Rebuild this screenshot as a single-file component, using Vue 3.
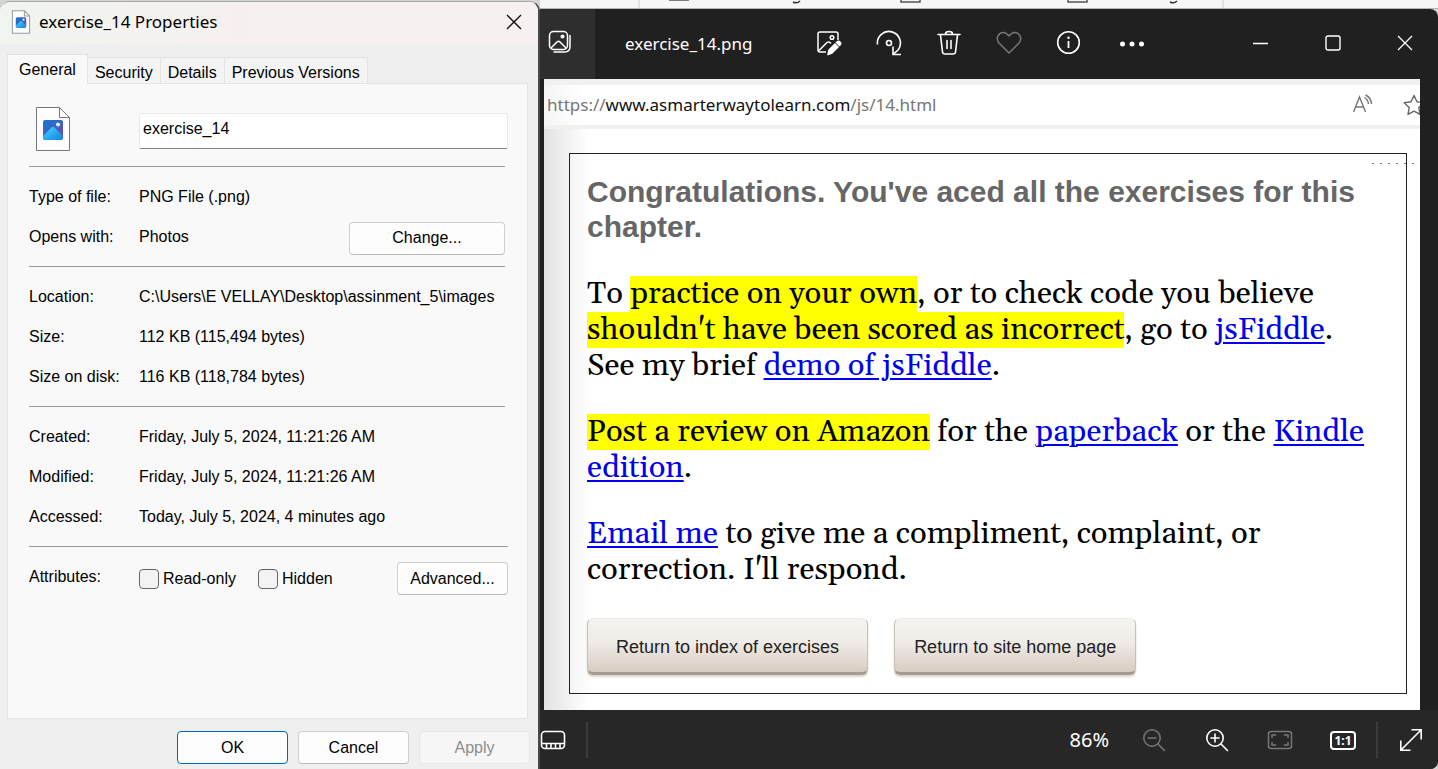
<script setup>
import { ref } from 'vue'

const fileName = ref('exercise_14')
const tabs = ['General', 'Security', 'Details', 'Previous Versions']
const location = [
  ['Location:', 'C:\\Users\\E VELLAY\\Desktop\\assinment_5\\images'],
  ['Size:', '112 KB (115,494 bytes)'],
  ['Size on disk:', '116 KB (118,784 bytes)'],
]
const dates = [
  ['Created:', 'Friday, July 5, 2024, 11:21:26 AM'],
  ['Modified:', 'Friday, July 5, 2024, 11:21:26 AM'],
  ['Accessed:', 'Today, July 5, 2024, 4 minutes ago'],
]
</script>

<template>
  <div class="desktop">
    <section class="dialog">
      <header class="titlebar">
        <svg class="file-small" width="20" height="24" viewBox="0 0 36 46">
          <defs>
            <linearGradient id="sky" x1="0" y1="0" x2="1" y2="1">
              <stop offset="0" stop-color="#1976cf" />
              <stop offset="0.55" stop-color="#3f5fc4" />
              <stop offset="1" stop-color="#8a3fb0" />
            </linearGradient>
            <linearGradient id="hill" x1="0" y1="0" x2="1" y2="1">
              <stop offset="0" stop-color="#50d4fb" />
              <stop offset="1" stop-color="#0b84e0" />
            </linearGradient>
          </defs>
          <path d="M1.500 1.500h23l10 10v33h-33z" fill="#fdfdfd" stroke="#9b9b9b" stroke-width="2" />
          <path d="M24.500 1.500v10h10" fill="none" stroke="#9b9b9b" stroke-width="2" />
          <rect x="8" y="14" width="20" height="20" rx="3" fill="url(#sky)" />
          <path d="M8 30l8.500-8.500q1.500-1.500 3 0L28 30q0 4-3 4H11q-3 0-3-4z" fill="url(#hill)" />
          <circle cx="23" cy="18.500" r="2" fill="#fff" />
        </svg>
        <h1>exercise_14 Properties</h1>
        <button class="close" aria-label="Close">
          <svg width="16" height="16" viewBox="0 0 16 16" fill="none" stroke="#111" stroke-width="1.400">
            <path d="M1 1l14 14M15 1L1 15" />
          </svg>
        </button>
      </header>

      <nav class="tabs" role="tablist">
        <button v-for="(t, i) in tabs" :key="t" role="tab" :aria-selected="i === 0" :class="{ active: i === 0 }">{{ t }}</button>
      </nav>

      <div class="panel">
        <div class="name-row">
          <svg width="36" height="46" viewBox="0 0 36 46">
            <path d="M1.500 1.500h23l10 10v33h-33z" fill="#fdfdfd" stroke="#777" />
            <path d="M24.500 1.500v10h10" fill="none" stroke="#777" />
            <rect x="8" y="14" width="20" height="20" rx="2" fill="url(#sky)" />
            <path d="M8 30l8.500-8.500q1.500-1.500 3 0L28 30q0 4-3 4H11q-3 0-3-4z" fill="url(#hill)" />
            <circle cx="23" cy="18.500" r="2" fill="#e8f4ff" />
          </svg>
          <input v-model="fileName" type="text" aria-label="File name" />
        </div>

        <dl class="group">
          <div class="row"><dt>Type of file:</dt><dd>PNG File (.png)</dd></div>
          <div class="row">
            <dt>Opens with:</dt><dd>Photos</dd>
            <button class="btn change">Change...</button>
          </div>
        </dl>
        <dl class="group">
          <div v-for="r in location" :key="r[0]" class="row"><dt>{{ r[0] }}</dt><dd>{{ r[1] }}</dd></div>
        </dl>
        <dl class="group">
          <div v-for="r in dates" :key="r[0]" class="row"><dt>{{ r[0] }}</dt><dd>{{ r[1] }}</dd></div>
        </dl>
        <div class="group attributes">
          <span class="attr-label">Attributes:</span>
          <label class="read-only"><input type="checkbox" />Read-only</label>
          <label><input type="checkbox" />Hidden</label>
          <button class="btn advanced">Advanced...</button>
        </div>
      </div>

      <footer class="actions">
        <button class="btn primary">OK</button>
        <button class="btn">Cancel</button>
        <button class="btn" disabled>Apply</button>
      </footer>
    </section>

    <div class="backdrop">
      <div class="strip" aria-hidden="true">
        <svg width="100%" height="8" fill="none" stroke="#555" stroke-width="1.500">
          <path d="M99 -1v9M683 -1v9" stroke="#ddd" />
          <path d="M129 0h20" />
          <path d="M361 -2v4h19v-4M528 -2v4h19v-4" />
          <path d="M253 2q4 2 7-1M630 2q4 2 7-1" stroke="#333" />
        </svg>
      </div>
      <section class="photos">
        <header class="toolbar">
          <button class="gallery" aria-label="Gallery">
            <svg width="24" height="24" viewBox="0 0 24 24" fill="none" stroke="#fff" stroke-width="1.500" stroke-linecap="round" stroke-linejoin="round">
              <rect x="1.500" y="1.500" width="18" height="18" rx="4" />
              <path d="M3 18l6-6q1.500-1.500 3 0l6 6M22 5.500v11q0 5.500-5.500 5.500H6" />
              <circle cx="14.500" cy="6.500" r="1.300" fill="#fff" />
            </svg>
          </button>
          <h2>exercise_14.png</h2>
          <div class="tools">
            <button aria-label="Edit image">
              <svg width="26" height="26" viewBox="0 0 26 26" fill="none" stroke="#fff" stroke-width="1.500" stroke-linejoin="round">
                <path d="M10 22H4q-2 0-2-2V4q0-2 2-2h16q2 0 2 2v6M3 20.500l8-8q1.500-1 3 0l1 1" />
                <circle cx="16" cy="7.500" r="1.800" />
                <path d="M12 24.500l1-4.500 8-8q1.500-1.500 3 0t0 3l-8 8z" fill="#fff" stroke-width="1.500" />
                <path d="M19 12.500l4.500 4.500" stroke="#202020" stroke-width="1" />
              </svg>
            </button>
            <button aria-label="Rotate">
              <svg width="26" height="26" viewBox="0 0 26 26" fill="none" stroke="#fff" stroke-width="1.600">
                <path d="M1.500 14.500A11.500 11.500 0 1 1 22 20l-5 4.500M17 16.500V24.500h8" />
                <circle cx="13" cy="13" r="2.500" />
              </svg>
            </button>
            <button aria-label="Delete">
              <svg width="26" height="26" viewBox="0 0 26 26" fill="none" stroke="#fff" stroke-width="1.600" stroke-linecap="round" stroke-linejoin="round">
                <path d="M2 4.500h22M9.500 4q0-2.500 3.500-2.500t3.500 2.500M4.500 5l2 17q.3 2 2.500 2h8q2.200 0 2.500-2l2-17M11 10.500v8M15 10.500v8" />
              </svg>
            </button>
            <button aria-label="Favorite">
              <svg width="26" height="26" viewBox="0 0 26 26" fill="none" stroke="#777" stroke-width="1.500" stroke-linejoin="round">
                <path d="M13 23L3 13C-1 8 3 2.500 7 2.500q3.500 0 6 3.500 2.500-3.500 6-3.500c4 0 8 5.500 4 10.500z" />
              </svg>
            </button>
            <button aria-label="File info">
              <svg width="26" height="26" viewBox="0 0 26 26" fill="none" stroke="#fff" stroke-width="1.600">
                <circle cx="12.500" cy="12.500" r="10.800" /><path d="M12.500 11v7" stroke-width="1.800" />
                <circle cx="12.500" cy="7.800" r="1.200" fill="#fff" stroke="none" />
              </svg>
            </button>
            <button aria-label="See more">
              <svg width="26" height="26" viewBox="0 0 26 26" fill="#fff">
                <circle cx="3.500" cy="14" r="2.500" /><circle cx="13" cy="14" r="2.500" /><circle cx="22.500" cy="14" r="2.500" />
              </svg>
            </button>
          </div>
          <div class="window-controls">
            <button aria-label="Minimize"><svg width="16" height="16" fill="none" stroke="#fff"><path d="M0 8.500h15" stroke-width="1.300" /></svg></button>
            <button aria-label="Maximize"><svg width="16" height="16" fill="none" stroke="#fff"><rect x="1" y="1" width="14" height="14" rx="2" stroke-width="1.400" /></svg></button>
            <button aria-label="Close"><svg width="16" height="16" fill="none" stroke="#fff"><path d="M1 1l14 14M15 1L1 15" stroke-width="1.300" /></svg></button>
          </div>
        </header>

        <main class="picture">
          <div class="address">
            <span>https://<b>www.asmarterwaytolearn.com</b>/js/14.html</span>
            <div class="address-icons">
              <svg width="22" height="22" viewBox="0 0 22 22" fill="none" stroke="#777" stroke-width="1.400">
                <path d="M1.500 18L7.500 3l6 15M3.500 13h8M12.500 3.500q3.500 2 4 6.500M13.500 1q5.500 2.500 6 9" />
              </svg>
              <svg class="star" width="22" height="22" viewBox="0 0 22 22" fill="none" stroke="#666" stroke-width="1.400" stroke-linejoin="round">
                <path d="M11 1.500l3 6.200 6.800 1-5 4.800 1.200 6.800-6-3.200-6 3.200 1.200-6.800-5-4.800 6.800-1z" />
              </svg>
            </div>
          </div>
          <article class="exercise">
            <i class="dots"></i>
            <h3>Congratulations. You've aced all the exercises for this chapter.</h3>
            <p>
              To <mark>practice on your own</mark>, or to check code you believe<br />
              <mark>shouldn't have been scored as incorrect</mark>, go to <a href="#">jsFiddle</a>.<br />
              See my brief <a href="#">demo of jsFiddle</a>.
            </p>
            <p>
              <mark>Post a review on Amazon</mark> for the <a href="#">paperback</a> or the <a class="wrapping" href="#">Kindle<br />edition</a>.
            </p>
            <p><a href="#">Email me</a> to give me a compliment, complaint, or<br />correction. I'll respond.</p>
            <div class="returns">
              <button>Return to index of exercises</button>
              <button>Return to site home page</button>
            </div>
          </article>
        </main>

        <footer class="statusbar">
          <button class="film" aria-label="Filmstrip">
            <svg width="26" height="20" viewBox="0 0 26 20" fill="none" stroke="#fff" stroke-width="1.600">
              <rect x="1.500" y="1.500" width="23" height="17" rx="3.500" />
              <path d="M2 13.500h22M6.500 14v4M11 14v4M15.500 14v4M20 14v4" />
            </svg>
          </button>
          <i class="rule"></i>
          <output class="zoom">86%</output>
          <div class="zoom-tools">
            <button aria-label="Zoom out">
              <svg width="26" height="26" viewBox="0 0 26 26" fill="none" stroke="#777" stroke-width="1.500" stroke-linecap="round">
                <circle cx="11" cy="11" r="8.200" /><path d="M7 11h8M17 17l6.500 6.500" />
              </svg>
            </button>
            <button aria-label="Zoom in">
              <svg width="26" height="26" viewBox="0 0 26 26" fill="none" stroke="#fff" stroke-width="1.600" stroke-linecap="round">
                <circle cx="11" cy="11" r="8.200" /><path d="M7 11h8M11 7v8M17 17l6.500 6.500" />
              </svg>
            </button>
            <button aria-label="Fit to window">
              <svg width="26" height="26" viewBox="0 0 26 26" fill="none" stroke="#777" stroke-width="1.500">
                <rect x="1.500" y="4.500" width="23" height="17" rx="2.500" />
                <path d="M5 11V8h4M17 8h4v3M5 15v3h4M17 18h4v-3" />
              </svg>
            </button>
            <button class="actual" aria-label="Actual size"><span>1:1</span></button>
          </div>
          <i class="rule"></i>
          <button class="full" aria-label="Full screen">
            <svg width="24" height="24" viewBox="0 0 24 24" fill="none" stroke="#fff" stroke-width="1.600">
              <path d="M2 22L22 2M12.500 1.800h9.700v9.700M1.800 12.500v9.700h9.700" />
            </svg>
          </button>
        </footer>
      </section>
    </div>
  </div>
</template>

<style>
body { background: #ececec; }
</style>

<style scoped>
* { box-sizing: border-box; }
h1, h2, h3, p, dl, dd { margin: 0; font-weight: 400; }
button { font: inherit; color: inherit; border: 0; background: none; padding: 0; }
svg { display: block; flex: none; }

.desktop { display: flex; min-height: 100vh; background: #d4d4d4; font-family: "Liberation Sans", Arial, sans-serif; overflow: hidden; }

.dialog { flex: 0 0 540px; display: flex; flex-direction: column; margin-top: 1px; border-top: 1px solid #a9a9a9; border-right: 2px solid #484848; border-radius: 10px 10px 0 0; background: #efefef; color: #000; font-size: 16px; line-height: 20px; overflow: hidden; }
.titlebar { height: 42px; display: flex; align-items: center; gap: 8px; padding: 0 16px 2px 11px; background: linear-gradient(90deg, #f1f4ef, #f6f0f0 50%); }
.titlebar h1 { flex: 1; font: 17px/24px "Noto Sans", sans-serif; }
.tabs { display: flex; align-items: flex-end; height: 40px; padding-left: 7px; }
.tabs button { height: 27px; padding: 4px 7px 0; border: 1px solid #e3e3e3; border-left-width: 0; border-bottom: 0; background: #f4f4f4; white-space: nowrap; }
.tabs .active { position: relative; z-index: 1; height: 30px; padding: 0 11px; border-left-width: 1px; background: #f9f9f9; }
.panel { flex: 1; margin: -1px 10px 0 7px; padding: 22px 22px 0 21px; border: 1px solid #e3e3e3; background: #f9f9f9; }
.name-row { display: flex; justify-content: space-between; height: 60px; padding-left: 6px; margin-right: -3px; }
.name-row input { align-self: flex-start; margin-top: 7px; width: 369px; height: 36px; padding: 0 3px 4px; border: 1px solid #e8e8e8; border-bottom-color: #808080; border-radius: 2px; background: #fff; font: inherit; color: #000; outline: 0; }
.group { border-top: 1px solid #999; padding: 10px 0 9px; }
.row { display: flex; align-items: center; height: 40px; }
.row dt, .attr-label { flex: 0 0 110px; }
.btn { height: 33px; border: 1px solid #cfcfcf; border-bottom-color: #bbb; border-radius: 4px; background: #fdfdfd; width: 111px; }
.change { width: 156px; margin: 2px 0 0 auto; }
.attributes { display: flex; align-items: center; height: 64px; padding: 0; margin-right: -3px; }
.attr-label { padding-bottom: 4px; }
.attributes label { display: flex; align-items: center; gap: 4px; white-space: nowrap; }
.attributes .read-only { width: 119px; }
.attributes input { appearance: none; width: 20px; height: 20px; margin: 0; border: 1px solid #666; border-radius: 4px; background: #f3f3f3; }
.advanced { margin-left: auto; }
.actions { display: flex; justify-content: flex-end; gap: 10px; padding: 12px 8px 5px; }
.btn.primary { border-color: #0067c0; }
.btn:disabled { border-color: #e6e6e6; background: #f6f6f6; color: #8d8d8d; }

.backdrop { flex: 1; min-width: 0; display: flex; flex-direction: column; }
.strip { height: 9px; background: #f6f6f6; border-bottom: 1px solid #b5b5b5; overflow: hidden; }
.photos { flex: 1; display: flex; flex-direction: column; background: #202020; color: #fff; border-radius: 0 8px 8px 0; overflow: hidden; }
.toolbar { display: flex; height: 70px; align-items: center; }
.gallery { width: 55px; height: 70px; display: flex; align-items: center; padding: 0 0 4px 8px; background: #2e2e2e; }
.toolbar h2 { width: 191px; padding-left: 30px; font: 17px/24px "Noto Sans", sans-serif; }
.tools { display: flex; gap: 34px; padding: 0 0 2px 30px; }
.tools button:last-child { margin-left: 3px; }
.window-controls { display: flex; gap: 56px; margin: 0 25px 2px auto; }

.picture { flex: 1; margin: 0 18px 0 4px; background: linear-gradient(90deg, #e2e2e2, #fff 44px); overflow: hidden; }
.address { display: flex; align-items: center; justify-content: space-between; height: 50px; padding-left: 3px; border-top: 6px solid #f1f1f1; border-bottom: 4px solid #f1f1f1; background: linear-gradient(90deg, #f5f5f5, #fff 40px); color: #777; font: 17px/24px "Noto Sans", sans-serif; }
.address b { color: #111; font-weight: 400; }
.address-icons { display: flex; gap: 29px; margin-right: -5px; }
.exercise { position: relative; margin: 24px 13px 16px 25px; min-height: 541px; padding: 20px 16px 15px 17px; border: 1px solid #222; background: linear-gradient(90deg, #f4f4f4, #fff 22px); color: #000; }
.dots { position: absolute; top: 9px; right: -13px; width: 47px; height: 1px; background: repeating-linear-gradient(90deg, #777 0 2px, transparent 2px 8px); }
.exercise h3 { margin-bottom: 32px; font-size: 30px; line-height: 35px; font-weight: 700; color: #666; }
.exercise p { margin-bottom: 30px; font: 31px/36px Gelasio, Georgia, "Liberation Serif", serif; white-space: nowrap; }
.exercise a { color: #00e; text-decoration-thickness: 2px; text-underline-offset: 3px; }
.exercise mark, .exercise a:not(.wrapping) { display: inline-block; }
.exercise mark { background: #ff0; color: inherit; }
.returns { display: flex; gap: 26px; }
.returns button { height: 57px; padding: 4px 28px 0; border: 1px solid #c8bfb6; border-top-color: #f0ece8; border-bottom: 3px solid #a69b8f; border-radius: 6px; background: linear-gradient(#f6f3f0, #efebe7 45%, #d8ccc0); color: #222; font-size: 18px; box-shadow: 0 2px 2px #ddd5cd; }
.returns button:last-child { padding: 4px 19px 0; }

.statusbar { display: flex; align-items: center; height: 59px; padding-top: 1px; background: #272727; }
.film { margin: 0 20px 0 0; }
.rule { width: 2px; height: 36px; background: #3b3b3b; }
.zoom { margin-left: auto; font: 20px/26px "Noto Sans", sans-serif; }
.zoom-tools { display: flex; align-items: center; gap: 37px; margin: 0 20px 0 32px; }
.actual { width: 26px; height: 19px; border: 2px solid #fff; border-radius: 4px; font: 700 12px/15px "Noto Sans", sans-serif; }
.full { margin: 0 15px 0 21px; }
</style>
